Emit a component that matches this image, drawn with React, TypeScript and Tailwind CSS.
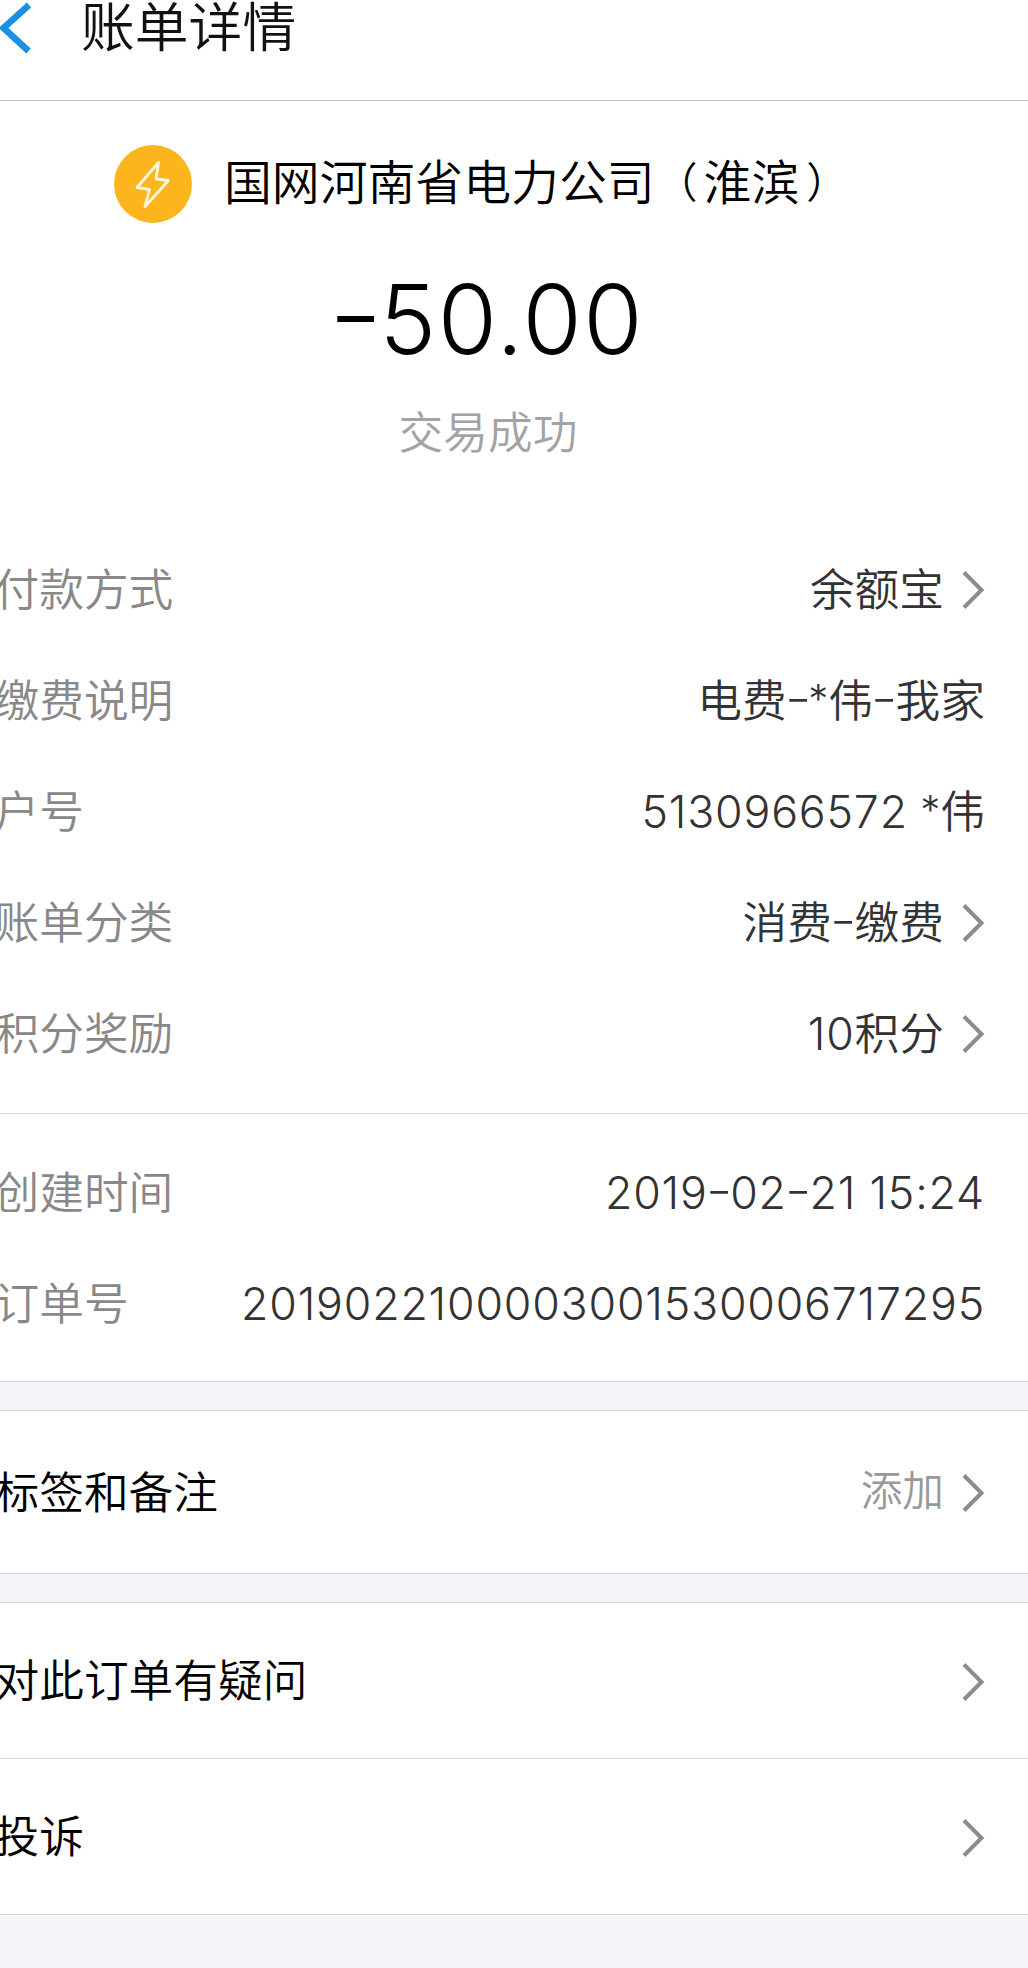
import React from 'react';

const Chevron = () => (
  <svg className="ml-[18px] h-[40px] w-[23px] shrink-0" viewBox="0 0 23 40" fill="none">
    <path d="M2 2.5 L19.5 20 L2 37.5" stroke="#8c8c8c" strokeWidth="4" />
  </svg>
);

/* Latin runs are set lighter and slightly wider than the Chinese text around them. */
const Mixed = ({ text }: { text: string }) => (
  <span>
    {text.split(/(-|\*|[0-9: ]+)/).map((part, i) => {
      if (part === '-')
        return (
          <span key={i} className="relative -top-[3px] mx-[1.2px] inline-block scale-x-[1.3] font-light">
            -
          </span>
        );
      if (part === '*')
        return (
          <span key={i} className="relative -top-[4px] -ml-[1px] text-[40px] leading-none font-light">
            *
          </span>
        );
      if (/^[0-9: ]+$/.test(part))
        return (
          <span key={i} className="whitespace-pre font-light tracking-[0.8px]">
            {part}
          </span>
        );
      return part;
    })}
  </span>
);

type RowProps = { label: string; value: string; arrow?: boolean };

const DetailRow = ({ label, value, arrow }: RowProps) => (
  <div className="flex h-[111px] items-center justify-between pr-[43px]">
    <span className="-ml-[5.5px] text-[#888888]">{label}</span>
    <div className="flex items-center text-[#333333]">
      <Mixed text={value} />
      {arrow && <Chevron />}
    </div>
  </div>
);

const ActionRow = ({ label, hint }: { label: string; hint?: string }) => (
  <div className="flex h-full items-center justify-between pt-[2px] pr-[43px]">
    <span className="-ml-[5.5px] text-black">{label}</span>
    <div className="flex items-center">
      {hint && <span className="-mt-[3px] text-[41.7px] text-[#999999]">{hint}</span>}
      <Chevron />
    </div>
  </div>
);

const payment: RowProps[] = [
  { label: '付款方式', value: '余额宝', arrow: true },
  { label: '缴费说明', value: '电费-*伟-我家' },
  { label: '户号', value: '5130966572 *伟' },
  { label: '账单分类', value: '消费-缴费', arrow: true },
  { label: '积分奖励', value: '10积分', arrow: true },
];

const order: RowProps[] = [
  { label: '创建时间', value: '2019-02-21 15:24' },
  { label: '订单号', value: '2019022100003001530006717295' },
];

export default function App() {
  return (
    <div className="flex h-[1968px] w-[1028px] flex-col overflow-hidden whitespace-nowrap bg-[#f4f4f9] font-['Inter','Noto_Sans_CJK_SC',sans-serif] text-[44.7px] leading-none font-[350]">
      <header className="flex h-[101px] shrink-0 items-start border-b-1 border-[#c4c4c4] bg-white">
        <svg className="h-[56px] w-[34px] shrink-0" viewBox="0 0 34 56" fill="none">
          <path d="M29 5 L3.5 28 L28.5 51" stroke="#1a8fe6" strokeWidth="6.5" />
        </svg>
        <h1 className="mt-[1px] ml-[47px] text-[53.8px] leading-[54px] text-[#111111]">账单详情</h1>
      </header>

      <section className="h-[1281px] shrink-0 border-b-1 border-[#d9d9dc] bg-white">
        <div className="flex h-[434px] w-[978px] flex-col items-center">
          <div className="mt-[44px] flex h-[78px] w-full items-center pl-[114px]">
            <svg className="h-[78px] w-[78px] shrink-0" viewBox="0 0 78 78" fill="none">
              <circle cx="39" cy="39" r="39" fill="#fdb51e" />
              <path
                d="M44.5 17.5 L23 42.5 L35.5 44.5 L31 61.5 L54.5 35.5 L42 34 Z"
                stroke="#fff6dc"
                strokeWidth="2.8"
                strokeLinejoin="round"
              />
            </svg>
            <span className="ml-[32px] text-[47.85px] text-black">
              国网河南省电力公司
              <span className="relative -top-[2px] mr-[6px] ml-[1px] text-[42px]">（</span>
              淮滨
              <span className="relative -top-[2px] ml-[7px] text-[42px]">）</span>
            </span>
          </div>
          <div className="mt-[48px] flex text-[96px] leading-[96px] font-light text-black">
            <span className="relative -top-[5px] mr-[2px] inline-block scale-x-[1.26]">-</span>
            <span className="tracking-[1.6px]">50.00</span>
          </div>
          <div className="mt-[44px] -ml-[2px] text-[#a3a3a3]">交易成功</div>
        </div>
        <div className="h-[579px] border-b-1 border-[#d9d9dc]">
          {payment.map((r) => (
            <DetailRow key={r.label} {...r} />
          ))}
        </div>
        <div className="pt-[24px]">
          {order.map((r) => (
            <DetailRow key={r.label} {...r} />
          ))}
        </div>
      </section>

      <section className="mt-[28px] h-[164px] shrink-0 border-y-1 border-[#d9d9dc] bg-white">
        <ActionRow label="标签和备注" hint="添加" />
      </section>

      <section className="mt-[28px] shrink-0 border-y-1 border-[#d9d9dc] bg-white">
        <div className="h-[156px] border-b-1 border-[#d9d9dc]">
          <ActionRow label="对此订单有疑问" />
        </div>
        <div className="h-[155px]">
          <ActionRow label="投诉" />
        </div>
      </section>
    </div>
  );
}
